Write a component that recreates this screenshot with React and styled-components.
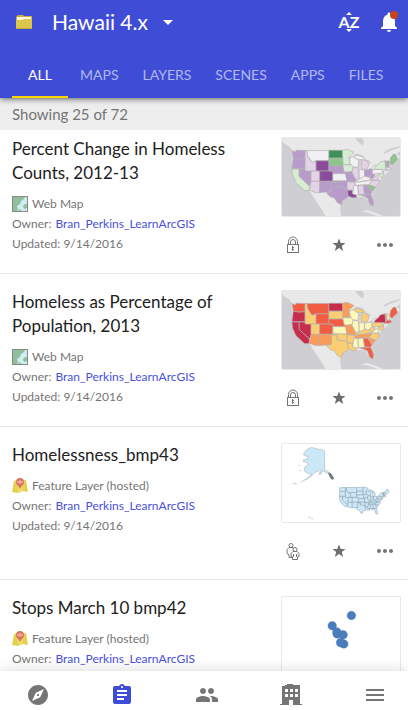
import React, {useState} from 'react';
import styled, {createGlobalStyle} from 'styled-components';
import {
  MdArrowDropDown,
  MdAssignment,
  MdExplore,
  MdMenu,
  MdMoreHoriz,
  MdNotifications,
  MdPeople,
} from 'react-icons/md';

const tabs = ['ALL', 'MAPS', 'LAYERS', 'SCENES', 'APPS', 'FILES'];

const items = [
  {
    title: 'Percent Change in Homeless Counts, 2012-13',
    type: 'Web Map',
    thumbnail: 'change',
    access: 'private',
  },
  {
    title: 'Homeless as Percentage of Population, 2013',
    type: 'Web Map',
    thumbnail: 'percentage',
    access: 'private',
  },
  {
    title: 'Homelessness_bmp43',
    type: 'Feature Layer (hosted)',
    thumbnail: 'states',
    access: 'group',
  },
  {
    title: 'Stops March 10 bmp42',
    type: 'Feature Layer (hosted)',
    thumbnail: 'stops',
    access: 'group',
  },
];

const states = {
  WA: '65,60 69,62 75,64 76,59 104,60 104,85 84,86 68,83',
  OR: '68,83 84,86 104,85 104,115 64,115',
  CA: '64,116 86,116 86,138 117,168 116,181 102,181 88,168 76,157 66,134',
  NV: '86,116 122,116 122,155 117,167 86,138',
  ID: '104,60 110,60 112,75 122,93 137,93 137,122 104,122',
  MT: '110,60 176,60 176,91 137,91 125,95 112,76',
  WY: '137,91 176,91 176,122 137,122',
  UT: '122,122 148,122 148,153 122,153',
  AZ: '122,153 148,153 148,187 135,187 117,180',
  CO: '148,122 188,122 188,153 148,153',
  NM: '148,153 184,153 184,184 148,187',
  ND: '176,59 217,59 219,83 176,83',
  SD: '176,83 218,83 219,107 176,107',
  NE: '176,107 215,107 222,113 227,130 188,130 188,122 176,122',
  KS: '188,130 228,130 231,152 188,152',
  OK: '184,152 231,152 231,175 200,170 200,156 184,156',
  TX: '184,156 200,156 200,170 232,175 233,202 216,211 215,224 202,218 192,203 180,200 168,187 184,184',
  MN: '217,59 230,56 252,66 236,80 240,102 219,103',
  IA: '218,103 245,103 250,112 245,125 222,125',
  MO: '225,126 246,124 257,148 255,155 231,154',
  AR: '231,155 255,156 250,180 232,180',
  LA: '232,180 247,180 247,190 258,193 260,202 248,203 234,198',
  WI: '238,82 250,79 266,90 264,111 248,109 240,98',
  MI: '276,88 290,90 297,102 291,116 274,116',
  UP: '250,78 262,74 280,80 286,86 264,88',
  IL: '248,112 265,112 268,138 260,150 252,138 246,126',
  IN: '267,118 283,118 284,139 268,146',
  OH: '284,119 306,116 306,130 296,140 284,137',
  KY: '258,152 270,145 284,138 297,141 302,149 258,156',
  TN: '256,156 308,150 296,163 254,165',
  MS: '251,166 264,166 264,196 248,191',
  AL: '264,166 280,165 284,191 266,194',
  GA: '280,165 294,165 306,184 303,192 284,191',
  FL: '268,194 303,192 311,215 309,228 299,222 293,204 284,198',
  SC: '293,165 307,164 318,170 306,184',
  NC: '296,163 308,151 328,150 327,161 317,170',
  VA: '301,149 313,142 321,135 328,149',
  WV: '298,140 306,130 316,134 306,147',
  PA: '308,118 335,116 340,128 308,131',
  NY: '314,112 324,104 332,94 346,91 348,120 338,117 314,117',
  NJ: '336,129 342,122 341,136 336,143 324,134',
  VT: '346,91 351,92 352,110 348,111',
  NH: '351,92 357,91 360,109 352,110',
  MA: '348,111 362,110 366,115 358,120 348,120',
  ME: '360,98 362,82 372,70 379,73 384,88 366,105',
};

const palettes = {
  change: {
    base: '#b79bc9',
    '#f1f0f2': ['MT', 'KS', 'WI', 'IN', 'KY', 'TN', 'MS', 'PA', 'UP'],
    '#e4d3e6': ['ID', 'UT', 'AZ', 'IL', 'MI', 'AR', 'AL', 'NC', 'VA', 'MA'],
    '#8a4b98': ['WY', 'CO', 'LA'],
    '#d6edd1': ['CA', 'MN', 'IA', 'NY', 'NJ'],
    '#8cc58d': ['SD', 'SC', 'ME', 'VT'],
    '#3f8f5a': ['ND'],
  },
  percentage: {
    base: '#fbce73',
    '#c62c4b': ['OR', 'CA', 'NV', 'ND', 'NY'],
    '#f15c43': ['WA', 'MT', 'WY', 'CO', 'NE', 'GA', 'FL', 'ME', 'MA'],
    '#fb9b58': ['AZ', 'NM', 'MN', 'MO', 'TN', 'SC', 'VT'],
    '#fcf9bb': ['KS', 'IA', 'WI', 'IL', 'IN', 'OH', 'MS', 'AL', 'VA', 'NH'],
  },
  states: {base: '#cce8f7'},
};

const stateColor = (palette, state) =>
  Object.keys(palette).find(
    color => color !== 'base' && palette[color].includes(state)
  ) || palette.base;

const States = ({palette, stroke, strokeWidth = 2}) => (
  <g stroke={stroke} strokeWidth={strokeWidth} strokeLinejoin='round'>
    {Object.keys(states).map(state => (
      <polygon
        key={state}
        points={states[state]}
        fill={stateColor(palette, state)}
      />
    ))}
  </g>
);

const Basemap = () => (
  <g>
    <rect x='34' y='22' width='357' height='236' fill='#cfced3' />
    <path
      fill='#e9e9ea'
      d='M34 22H391V62L380 70L391 78L384 88L366 106L360 120L342 136L328 152L318 170L306 184L311 228L299 222L284 198L260 202L233 202L216 211L210 232L213 258H166L146 226L116 181L88 168L66 134L64 116L66 60L54 46L40 38L34 30Z'
    />
    <path
      fill='#cfced3'
      d='M108 182L116 186L136 214L150 234L160 246L154 248L138 232L120 208Z'
    />
    <path
      fill='#cfced3'
      d='M250 76L260 69L272 72L284 79L280 83L262 78ZM267 90L275 88L273 104L270 116L266 112ZM286 86L298 90L304 98L297 101L290 92ZM292 117L308 110L310 114L296 120ZM308 105L322 101L320 106L310 108Z'
    />
    <path fill='#cfced3' d='M256 22H276L282 32L280 44L272 40L262 32Z' />
    <path fill='#cfced3' d='M340 66L362 54L391 46V50L364 60L344 70Z' />
    <path fill='#e9e9ea' d='M274 244L292 240L326 252L340 258H322L296 248Z' />
  </g>
);

const Alaska = () => (
  <g fill='#cce8f7' stroke='#7e8a92' strokeWidth='1'>
    <path d='M163 43V100L170 103L180 110L191 126L186 130L172 111L160 105L148 103L138 106L129 112L124 119L112 127L103 131L118 119L124 112L116 113L108 108L101 103L103 91L113 86L112 79L99 76L98 70L112 67L113 61L99 55L102 46L112 37L124 32L140 37L152 38Z' />
    <path d='M174 109L182 111L191 126L187 130L180 124Z' fill='#6c7880' />
    <path d='M148 108L154 106L152 113L146 114Z' />
    <path
      fill='none'
      stroke='#a9b2b7'
      strokeWidth='2'
      d='M104 130L90 138M79 142L67 142M88 89L84 85M91 103L86 102M113 243L120 245M122 248L128 249'
    />
  </g>
);

const Stops = () => (
  <g fill='#4a7dbb' stroke='#3e6ea8' strokeWidth='1'>
    <circle cx='244' cy='78' r='13' />
    <circle cx='186' cy='109' r='13' />
    <circle cx='201' cy='134' r='13' />
    <circle cx='200' cy='128' r='13' />
    <circle cx='219' cy='136' r='13' />
    <circle cx='221' cy='164' r='13' />
    <circle cx='211' cy='160' r='13' />
  </g>
);

const ThumbnailImage = ({name}) => (
  <svg viewBox='34 22 357 236' preserveAspectRatio='none' aria-hidden='true'>
    {(name === 'change' || name === 'percentage') && (
      <>
        <Basemap />
        <States palette={palettes[name]} stroke='#b3aeb2' />
      </>
    )}
    {name === 'states' && (
      <>
        <Alaska />
        <g transform='translate(177 125) scale(0.47 0.48)'>
          <States
            palette={palettes.states}
            stroke='#8599a5'
            strokeWidth={3}
          />
        </g>
      </>
    )}
    {name === 'stops' && <Stops />}
  </svg>
);

const FolderIcon = () => (
  <svg width='18' height='16' viewBox='0 0 18 16' aria-hidden='true'>
    <path d='M1 3L3 1H8L9 2H17V8H1Z' fill='#c9b037' />
    <path d='M2 3H16V7H2Z' fill='#fbf6df' />
    <path d='M1 6H7L9 5H17V15H1Z' fill='#dcc54c' />
    <path d='M1 14H17V15H1Z' fill='#c5ad3c' />
  </svg>
);

const SortIcon = () => (
  <svg width='24' height='24' viewBox='0 0 24 24' fill='#fff' aria-hidden='true'>
    <path d='M9 5L12 2L15 5ZM9 19L12 22L15 19Z' />
    <text
      x='12'
      y='18'
      textAnchor='middle'
      fontFamily='Lato, sans-serif'
      fontWeight='700'
      fontSize='16'
    >
      AZ
    </text>
  </svg>
);

const WebMapIcon = () => (
  <svg width='16' height='16' viewBox='0 0 16 16' aria-hidden='true'>
    <rect x='0.5' y='0.5' width='15' height='15' fill='#d3ebf2' stroke='#828a8a' />
    <path d='M1 1H13L12 3L9 5L8 8L5 10L6 13L5 15H1Z' fill='#92bf9b' />
    <path d='M6 15L7 13L9 14V15ZM11 10L13 8H15V12L12 13Z' fill='#92bf9b' />
  </svg>
);

const LayerIcon = () => (
  <svg width='16' height='16' viewBox='0 0 16 16' aria-hidden='true'>
    <path d='M2 3L5 2L9 3L14 2L16 14L11 13L6 15L0 14Z' fill='#e5d04f' />
    <path d='M5 2L9 3L11 13L6 15Z' fill='#eedc70' />
    <path
      d='M8 0C5 0 4 2 4 4C4 7 7 8 8 11C9 8 12 7 12 4C12 2 11 0 8 0Z'
      fill='#d9735d'
    />
    <path d='M8 2V6M6 3V5M10 3V5' stroke='#f3d9d2' strokeWidth='1' />
  </svg>
);

const LockIcon = () => (
  <svg width='24' height='24' viewBox='0 0 24 24' fill='none' stroke='#757575' aria-hidden='true'>
    <rect x='6.5' y='11.5' width='11' height='8' />
    <path d='M7.500 11V8.500A4.500 4.500 0 0 1 16.500 8.500V11M9.500 11V9A2.500 2.500 0 0 1 14.500 9V11' />
    <path d='M11.500 13V18M12 14.500H13M12 16.500H13' />
  </svg>
);

const GroupAccessIcon = () => (
  <svg width='24' height='24' viewBox='0 0 24 24' fill='#fff' stroke='#757575' aria-hidden='true'>
    <circle cx='10' cy='6.500' r='2' />
    <path d='M8 8.500H12L14 10.500V15H12V18.500H8V15.500L6 14.500V10.500Z' />
    <circle cx='14' cy='10.500' r='2' />
    <path d='M12 12.500H16L18 14.500V17.500L16.500 18V20.500H11.500V18L10 17.500V14.500Z' />
    <path d='M12.500 15V18M15.500 15V18' />
  </svg>
);

const StarIcon = () => (
  <svg width='24' height='24' viewBox='0 0 24 24' fill='#6e6e6e' aria-hidden='true'>
    <path d='M12 5.500L13.800 10H18.500L14.800 12.900L16.200 18L12 15.100L7.800 18L9.200 12.900L5.500 10H10.200Z' />
  </svg>
);

const OrganizationIcon = () => (
  <svg width='24' height='24' viewBox='0 0 24 24' fill='currentColor' aria-hidden='true'>
    <path
      fillRule='evenodd'
      d='M6 2H8V1H14V2H21V21H23V22H1V21H3V3H6ZM6 6V9H9V6ZM11 6V9H14V6ZM16 6V9H19V6ZM6 11V14H9V11ZM11 11V14H14V11ZM16 11V14H19V11ZM10 17V22H14V17Z'
    />
  </svg>
);

const ContentItem = ({item}) => {
  const isMap = item.type === 'Web Map';
  return (
    <Item>
      <Details>
        <ItemTitle>{item.title}</ItemTitle>
        <MetaLine>
          {isMap ? <WebMapIcon /> : <LayerIcon />}
          {item.type}
        </MetaLine>
        <MetaLine>
          Owner: <OwnerLink href='#owner'>Bran_Perkins_LearnArcGIS</OwnerLink>
        </MetaLine>
        <MetaLine>Updated: 9/14/2016</MetaLine>
      </Details>
      <Preview>
        <Thumbnail>
          <ThumbnailImage name={item.thumbnail} />
        </Thumbnail>
        <Actions>
          <IconButton aria-label='Sharing'>
            {item.access === 'private' ? <LockIcon /> : <GroupAccessIcon />}
          </IconButton>
          <IconButton aria-label='Favorite'>
            <StarIcon />
          </IconButton>
          <IconButton aria-label='More'>
            <MdMoreHoriz size={24} />
          </IconButton>
        </Actions>
      </Preview>
    </Item>
  );
};

const App = () => {
  const [activeTab, setActiveTab] = useState('ALL');

  return (
    <>
      <GlobalStyle />
      <Page>
        <Header>
          <TopBar>
            <FolderIcon />
            <FolderButton>
              Hawaii 4.x
              <MdArrowDropDown size={24} />
            </FolderButton>
            <IconButton $light aria-label='Sort'>
              <SortIcon />
            </IconButton>
            <IconButton $light aria-label='Notifications'>
              <MdNotifications size={24} />
              <Badge />
            </IconButton>
          </TopBar>
          <Tabs>
            {tabs.map(tab => (
              <Tab
                key={tab}
                $active={tab === activeTab}
                onClick={() => setActiveTab(tab)}
              >
                {tab}
              </Tab>
            ))}
          </Tabs>
        </Header>
        <Content>
          <Status>Showing 25 of 72</Status>
          <List>
            {items.map(item => (
              <ContentItem key={item.title} item={item} />
            ))}
          </List>
        </Content>
        <BottomNav>
          <IconButton aria-label='Explore'>
            <MdExplore size={24} />
          </IconButton>
          <IconButton $active aria-label='Content'>
            <MdAssignment size={24} />
          </IconButton>
          <IconButton aria-label='Groups'>
            <MdPeople size={24} />
          </IconButton>
          <IconButton aria-label='Organization'>
            <OrganizationIcon />
          </IconButton>
          <IconButton aria-label='Menu'>
            <MdMenu size={24} />
          </IconButton>
        </BottomNav>
      </Page>
    </>
  );
};

export default App;

const GlobalStyle = createGlobalStyle`
  * {
    box-sizing: border-box;
  }
  body {
    margin: 0;
    background: #fff;
    color: #212121;
    font-family: Lato, 'Open Sans', sans-serif;
  }
  button {
    font-family: inherit;
    cursor: pointer;
  }
`;

const Page = styled.div`
  display: flex;
  flex-direction: column;
  height: 100vh;
`;

const Header = styled.header`
  flex: none;
  z-index: 1;
  background: #3f4dd6;
  box-shadow: 0 1px 6px rgba(0, 0, 0, 0.6);
`;

const TopBar = styled.div`
  display: flex;
  align-items: center;
  gap: 16px;
  height: 44px;
  padding: 0 7px 0 15px;
`;

const FolderButton = styled.button`
  display: flex;
  flex: 1;
  align-items: center;
  gap: 8px;
  padding: 0;
  margin-left: 3px;
  border: none;
  background: none;
  color: #fff;
  font-size: 21px;
  line-height: 24px;
`;

const IconButton = styled.button`
  position: relative;
  display: flex;
  flex: none;
  width: 24px;
  height: 24px;
  padding: 0;
  border: none;
  background: none;
  color: ${({$light, $active}) =>
    $light ? '#fff' : $active ? '#3f4dd6' : '#757575'};
`;

const Badge = styled.span`
  position: absolute;
  top: 1px;
  right: 3px;
  width: 8px;
  height: 8px;
  border-radius: 50%;
  background: #c8441b;
`;

const Tabs = styled.nav`
  display: flex;
  height: 54px;
  padding: 0 12px;
`;

const Tab = styled.button`
  min-width: 56px;
  padding: 12px 12px 4px;
  border: none;
  border-bottom: 2px solid ${({$active}) => ($active ? '#ffd500' : 'transparent')};
  background: none;
  color: ${({$active}) => ($active ? '#fff' : '#b2b8ef')};
  font-size: 14px;
`;

const Content = styled.main`
  flex: 1;
  min-height: 0;
  overflow-y: auto;
  scrollbar-width: none;
`;

const Status = styled.p`
  margin: 0;
  padding: 4px 12px;
  background: #eee;
  color: #757575;
  font-size: 15px;
  line-height: 24px;
`;

const List = styled.ul`
  margin: 0;
  padding: 0;
  list-style: none;
`;

const Item = styled.li`
  display: flex;
  justify-content: space-between;
  padding: 16px 7px 16px 12px;
  border-bottom: 1px solid #e8e8e8;
  &:first-child {
    padding-top: 7px;
  }
`;

const Details = styled.div`
  flex: 1;
  min-width: 0;
  padding-right: 40px;
`;

const ItemTitle = styled.h2`
  margin: 0 0 9px;
  font-size: 17px;
  font-weight: 400;
  line-height: 24px;
`;

const MetaLine = styled.p`
  display: flex;
  align-items: center;
  gap: 4px;
  margin: 0;
  color: #757575;
  font-size: 12px;
  line-height: 20px;
`;

const OwnerLink = styled.a`
  color: #4a50dc;
  text-decoration: none;
`;

const Preview = styled.div`
  flex: none;
  width: 120px;
`;

const Thumbnail = styled.div`
  height: 80px;
  border: 1px solid #e8e8e8;
  border-radius: 2px;
  overflow: hidden;
  svg {
    display: block;
    width: 100%;
    height: 100%;
  }
`;

const Actions = styled.div`
  display: flex;
  gap: 22px;
  margin-top: 16px;
`;

const BottomNav = styled.nav`
  display: flex;
  flex: none;
  justify-content: space-between;
  z-index: 1;
  padding: 12px 21px 3px 26px;
  background: #fff;
  box-shadow: 0 -2px 12px rgba(0, 0, 0, 0.12);
`;
